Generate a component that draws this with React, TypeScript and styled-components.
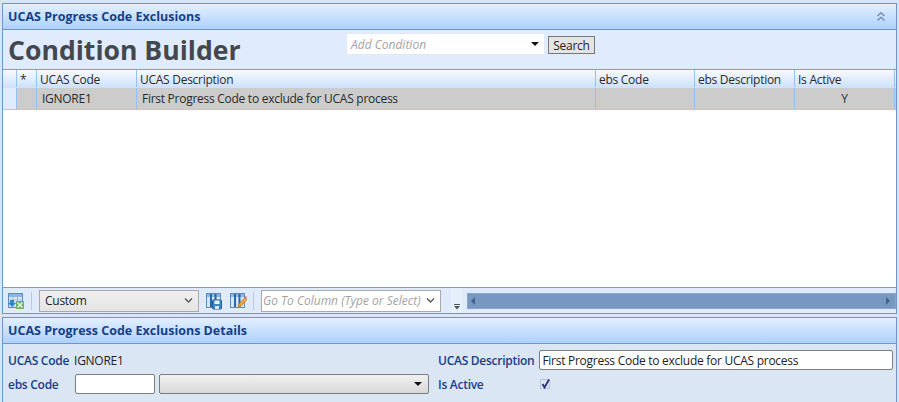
import React from "react";
import styled, { createGlobalStyle } from "styled-components";

const Global = createGlobalStyle`
  html, body { margin: 0; padding: 0; height: 402px; overflow: hidden; background: #d6e5f7; }
  * { box-sizing: border-box; }
  body { font-family: "Open Sans", "Noto Sans", "Liberation Sans", sans-serif; font-size: 12px; letter-spacing: -0.27px; color: #222; }
`;

const Page = styled.div`
  width: 899px; height: 402px; padding: 3px 2px 0 2px; display: flex; flex-direction: column; overflow: hidden;
`;
const Panel = styled.section`
  width: 895px; border: 1px solid #6e97c8; border-bottom: none; display: flex; flex-direction: column;
`;
const TopPanel = styled(Panel)`
  height: 312px; border-bottom: 1px solid #6e97c8; background: #fff;
`;
const BottomPanel = styled(Panel)`
  margin-top: 3px; height: 85px; background: #dbe6f4;
`;
const PanelHeader = styled.header`
  height: 26px; flex: none; display: flex; align-items: center; justify-content: space-between;
  padding: 0 10px 0 5px; background: linear-gradient(#e3efff, #aed1fb);
  border-bottom: 1px solid #6e97c8; color: #153f87; font-weight: 700; font-size: 12.5px; letter-spacing: 0;
`;
const Builder = styled.div`
  height: 40px; flex: none; background: #e0ecfd; display: flex; align-items: flex-start;
  border-bottom: 1px solid #7b9fcb;
`;
const BuilderTitle = styled.h1`
  margin: 0; width: 343px; padding: 2px 0 0 5px; font-size: 26.6px; line-height: 36px; font-weight: 700; color: #44484e; white-space: nowrap; letter-spacing: 0;
`;
const ConditionBox = styled.div`
  width: 199px; height: 22px; margin-top: 3px; background: #fff; border: 1px solid #e3e9f2;
  display: flex; align-items: center; justify-content: space-between; padding: 0 4px;
  font-style: italic; color: #a3a3a3; letter-spacing: 0;
`;
const Arrow = styled.span`
  width: 0; height: 0; border-left: 4px solid transparent; border-right: 4px solid transparent;
  border-top: 4px solid #111; flex: none; margin-right: 1px;
`;
const SearchButton = styled.button`
  width: 47px; height: 18px; margin: 6px 0 0 3px; padding: 0; background: #e4e4e4; border: 1px solid #777;
  font: inherit; letter-spacing: inherit; color: #222; line-height: 15px;
`;
const GridRow = styled.div<{ $h: number; $header?: boolean }>`
  height: ${(p) => p.$h}px; flex: none; display: grid;
  grid-template-columns: 14px 20px 100px 459px 99px 100px 100px 1fr;
  background: ${(p) => (p.$header ? "linear-gradient(#f6faff, #cfe2fb)" : "#ccc")};
  border-bottom: 1px solid ${(p) => (p.$header ? "#cfe2fb" : "#a8cbf4")};
`;
const Cell = styled.div<{ $center?: boolean; $pad?: number; $blue?: boolean }>`
  border-right: 1px solid #94c0f5; padding-left: ${(p) => p.$pad ?? 3}px; white-space: nowrap; overflow: hidden;
  line-height: 20px; text-align: ${(p) => (p.$center ? "center" : "left")};
  background: ${(p) => (p.$blue ? "#e0ecfd" : "transparent")}; color: #2a2a2a;
`;
const BodyCell = styled(Cell)`
  line-height: 21px;
`;
const Empty = styled.div`
  flex: 1; background: #fff;
`;
const Toolbar = styled.div`
  height: 26px; flex: none; background: #dfebfb; border-top: 1px solid #7b9fcb;
  display: flex; align-items: center; padding-left: 4px;
`;
const ToolIcon = styled.svg<{ $ml?: number }>`
  width: 18px; height: 18px; flex: none; display: block; margin-left: ${(p) => p.$ml ?? 0}px;
`;
const Divider = styled.div`
  width: 1px; height: 18px; background: #bcc9d8; flex: none; margin: 0 7px 0 6px;
`;
const CustomSelect = styled.div`
  width: 160px; height: 22px; flex: none; background: linear-gradient(#f0f0f0, #e4e4e4); border: 1px solid #a9a9a9;
  display: flex; align-items: center; justify-content: space-between; padding: 0 5px 1px 5px;
`;
const GoTo = styled.div`
  width: 180px; height: 22px; flex: none; background: #fff; border: 1px solid #a9a9a9;
  display: flex; align-items: center; justify-content: space-between; padding: 0 5px 0 1px;
  font-style: italic; color: #a3a3a3; white-space: nowrap; letter-spacing: 0;
`;
const Grip = styled.div`
  width: 11px; height: 25px; margin-left: 10px; background: #e6f0fc; flex: none; position: relative;
`;
const GripIcon = styled.svg`
  position: absolute; left: 2px; bottom: 3px; display: block;
`;
const Scrollbar = styled.div`
  margin-left: 5px; width: 429px; height: 16px; background: #7898c2; border: 1px solid #8aa6cb; flex: none;
  display: flex; align-items: center; justify-content: space-between; padding: 0 5px 0 3px;
`;
const ScrollArrow = styled.span<{ $right?: boolean }>`
  width: 0; height: 0; border-top: 4px solid transparent; border-bottom: 4px solid transparent;
  ${(p) => (p.$right ? "border-left: 4px solid #44628c;" : "border-right: 4px solid #44628c;")}
`;
const Form = styled.div`
  flex: 1; display: grid; grid-template-columns: 430px 1fr; grid-template-rows: 24px 24px;
  padding: 4px 3px 0 5px; align-items: center;
`;
const Field = styled.div`
  display: flex; align-items: center; height: 24px;
`;
const Label = styled.label<{ $w?: number }>`
  color: #153f87; font-weight: 600; white-space: nowrap; ${(p) => p.$w && `width: ${p.$w}px; flex: none;`}
`;
const Value = styled.span`
  margin-left: 5px; color: #222;
`;
const CodeInput = styled.input`
  width: 80px; height: 20px; flex: none; background: #fff; border: 1px solid #7d7d7d; border-radius: 2px;
  padding: 0 2px; font: inherit; letter-spacing: inherit; color: #222; outline: none;
`;
const DescriptionInput = styled(CodeInput)`
  flex: 1; min-width: 0; margin-left: 5px;
`;
const FormSelect = styled.div`
  width: 270px; height: 20px; margin-left: 4px; background: linear-gradient(#f1f1f1, #d8d8d8);
  border: 1px solid #7d7d7d; border-radius: 2px; display: flex; align-items: center; justify-content: flex-end; padding-right: 5px;
`;
const CheckBox = styled.svg`
  width: 13px; height: 13px; margin-left: 55px; display: block;
`;

const GridIcon = ({ variant, ml }: { variant: "excel" | "save" | "edit"; ml?: number }) => (
  <ToolIcon viewBox="0 0 18 18" $ml={ml}>
    <rect x="1.500" y="1.500" width="14" height="14" fill="#d5e6f7" stroke="#5d8cc0" />
    <rect x="2" y="2" width="13" height="3" fill="#8fb4dc" />
    <path d="M6 2v13M10.500 2v13" stroke={variant === "excel" ? "#8db3dc" : "#2a66a8"} strokeWidth={variant === "excel" ? 1 : 2} />
    {variant === "excel" && (
      <>
        <path d="M2 8h13M2 11h13" stroke="#9dbfe2" />
        <path d="M1 11l4 4 4-4H7V8H3v3z" fill="#2f86c9" />
        <rect x="9" y="9" width="8" height="8" fill="#6fb06a" />
        <path d="M10.500 10.500l5 5M15.500 10.500l-5 5" stroke="#eef7ea" strokeWidth="1.400" />
      </>
    )}
    {variant === "save" && (
      <>
        <rect x="7.500" y="8" width="9" height="9" rx="1" fill="#3d86c6" stroke="#235f99" />
        <rect x="9.500" y="8.500" width="5" height="3.500" fill="#e9f3fb" />
        <rect x="10" y="14" width="4" height="3" fill="#dbe9f6" />
      </>
    )}
    {variant === "edit" && (
      <>
        <path d="M9 16l1-4 6-6.500 2 2-6 6.500z" fill="#f0a63c" stroke="#b66f1d" strokeWidth=".7" />
        <path d="M15.500 5l2 2 .5-1.500-1-1.500z" fill="#e06a8c" />
      </>
    )}
  </ToolIcon>
);

const Chevron = () => (
  <svg width="9" height="7" viewBox="0 0 9 7">
    <path d="M1 1.500l3.500 3.500L8 1.500" fill="none" stroke="#555" strokeWidth="1.300" />
  </svg>
);

const Collapse = () => (
  <svg width="10" height="11" viewBox="0 0 10 11">
    <path d="M1.500 5L5 1.800 8.500 5M1.500 9.500L5 6.300l3.500 3.200" fill="none" stroke="#6f8fb5" strokeWidth="1.500" />
  </svg>
);

export default function App() {
  const columns = ["", "*", "UCAS Code", "UCAS Description", "ebs Code", "ebs Description", "Is Active"];
  return (
    <Page>
      <Global />
      <TopPanel>
        <PanelHeader>
          UCAS Progress Code Exclusions
          <Collapse />
        </PanelHeader>
        <Builder>
          <BuilderTitle>Condition Builder</BuilderTitle>
          <ConditionBox>
            Add Condition
            <Arrow />
          </ConditionBox>
          <SearchButton>Search</SearchButton>
        </Builder>
        <GridRow $h={18} $header>
          {columns.map((c, i) => (
            <Cell key={i}>{c}</Cell>
          ))}
        </GridRow>
        <GridRow $h={22}>
          <BodyCell $blue />
          <BodyCell />
          <BodyCell $pad={5}>IGNORE1</BodyCell>
          <BodyCell $pad={5}>First Progress Code to exclude for UCAS process</BodyCell>
          <BodyCell />
          <BodyCell />
          <BodyCell $center $pad={0}>Y</BodyCell>
        </GridRow>
        <Empty />
        <Toolbar>
          <GridIcon variant="excel" />
          <Divider />
          <CustomSelect>
            Custom
            <Chevron />
          </CustomSelect>
          <GridIcon variant="save" ml={6} />
          <GridIcon variant="edit" ml={6} />
          <Divider />
          <GoTo>
            Go To Column (Type or Select)
            <Chevron />
          </GoTo>
          <Grip>
            <GripIcon width="8" height="6" viewBox="0 0 8 6">
              <path d="M1 .5h6" stroke="#555" />
              <path d="M1 2h6L4 5.500z" fill="#555" />
            </GripIcon>
          </Grip>
          <Scrollbar>
            <ScrollArrow />
            <ScrollArrow $right />
          </Scrollbar>
        </Toolbar>
      </TopPanel>
      <BottomPanel>
        <PanelHeader>UCAS Progress Code Exclusions Details</PanelHeader>
        <Form>
          <Field>
            <Label>UCAS Code</Label>
            <Value>IGNORE1</Value>
          </Field>
          <Field>
            <Label>UCAS Description</Label>
            <DescriptionInput readOnly value="First Progress Code to exclude for UCAS process" />
          </Field>
          <Field>
            <Label $w={67}>ebs Code</Label>
            <CodeInput readOnly value="" />
            <FormSelect>
              <Arrow />
            </FormSelect>
          </Field>
          <Field>
            <Label>Is Active</Label>
            <CheckBox viewBox="0 0 13 13">
              <rect x="1.500" y="1.500" width="9" height="9" fill="#dbe6f4" stroke="#b8c4d4" />
              <path d="M3.500 6l2 3.500L10 1.500" fill="none" stroke="#2a2f7a" strokeWidth="1.800" />
            </CheckBox>
          </Field>
        </Form>
      </BottomPanel>
    </Page>
  );
}
